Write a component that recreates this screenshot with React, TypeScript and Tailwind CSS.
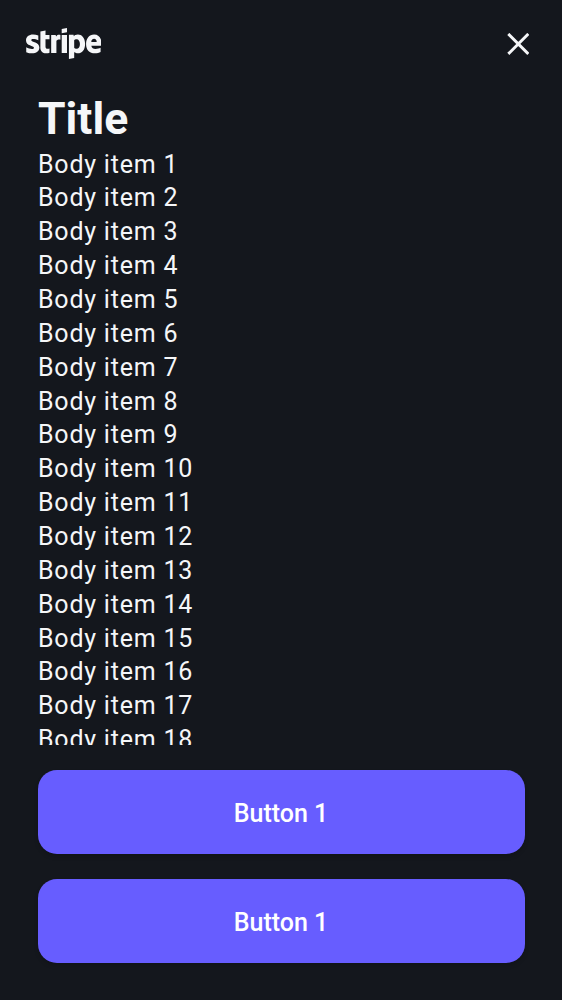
const items = Array.from({ length: 18 }, (_, i) => i + 1);

function StripeLogo() {
  return (
    <svg viewBox="54 36 360.02 149.84" preserveAspectRatio="none" className="h-[31px] w-[75.7px]" fill="#f5f6f8" fillRule="evenodd" aria-label="Stripe">
      <path d="M414 113.4c0-25.6-12.4-45.8-36.1-45.8-23.8 0-38.2 20.2-38.2 45.6 0 30.1 17 45.3 41.4 45.3 11.9 0 20.9-2.7 27.7-6.5v-20c-6.8 3.4-14.6 5.5-24.5 5.5-9.7 0-18.3-3.4-19.4-15.2h48.9c0-1.3.2-6.5.2-8.9zm-49.4-9.5c0-11.3 6.9-16 13.2-16 6.1 0 12.6 4.7 12.6 16h-25.8zM301.1 67.6c-9.8 0-16.1 4.6-19.6 7.8l-1.3-6.2h-22v116.6l25-5.3.1-28.3c3.6 2.6 8.9 6.3 17.7 6.3 17.9 0 34.2-14.4 34.2-46.1-.1-29-16.6-44.8-34.1-44.8zm-6 68.9c-5.9 0-9.4-2.1-11.8-4.7l-.1-37.1c2.6-2.9 6.2-4.9 11.9-4.9 9.1 0 15.4 10.2 15.4 23.3 0 13.4-6.2 23.4-15.4 23.4zM223.8 61.7l25.1-5.4V36l-25.1 5.3zM223.8 69.3h25.1v87.5h-25.1zM196.9 76.7l-1.6-7.4h-21.6v87.5h25V97.5c5.9-7.7 15.9-6.3 19-5.2v-23c-3.2-1.2-14.9-3.4-20.8 7.4zM146.9 47.6l-24.4 5.2-.1 80.1c0 14.8 11.1 25.7 25.9 25.7 8.2 0 14.2-1.5 17.5-3.3V135c-3.2 1.3-19 5.9-19-8.9V90.6h19V69.3h-19zM79.3 94.7c0-3.9 3.2-5.4 8.5-5.4 7.6 0 17.2 2.3 24.8 6.4V72.2c-8.3-3.3-16.5-4.6-24.8-4.6C67.5 67.6 54 78.2 54 95.9c0 27.6 38 23.2 38 35.1 0 4.6-4 6.1-9.6 6.1-8.3 0-18.9-3.4-27.3-8v23.8c9.3 4 18.7 5.7 27.3 5.7 20.8 0 35.1-10.3 35.1-28.2-.1-29.8-38.2-24.5-38.2-35.7z" />
    </svg>
  );
}

function ActionButton({ label }: { label: string }) {
  return (
    <button className="h-[83.5px] w-full shrink-0 rounded-[19px] bg-[#675dff] pt-[4px] text-[25px] leading-[30px] font-medium text-white shadow-[0_3px_4px_rgba(0,0,0,0.15)]">
      {label}
    </button>
  );
}

export default function App() {
  return (
    <div className="flex h-[1000px] w-[562px] flex-col overflow-hidden bg-[#14171d] font-[Roboto,sans-serif] text-[#f5f6f8]">
      <header className="flex h-[87px] shrink-0 items-center justify-between pr-[33px] pl-[25.5px]">
        <StripeLogo />
        <button aria-label="Close" className="pt-px">
          <svg viewBox="0 0 22 22" className="size-[22px]" fill="none" stroke="#f5f6f8" strokeWidth="2.9">
            <path d="M1.3 .9L21.3 20.9M21.3 .9L1.3 20.9" />
          </svg>
        </button>
      </header>
      <main className="h-[658px] shrink-0 overflow-hidden px-[38px] pt-[4px]">
        <h1 className="h-[56.6px] text-[44.5px] leading-[57px] font-bold">Title</h1>
        {items.map((n) => (
          <p key={n} className="h-[33.87px] text-[25px] leading-[33.87px] tracking-[0.78px]">
            Body item {n}
          </p>
        ))}
      </main>
      <footer className="flex flex-col gap-[25.5px] px-[37.5px] pt-[25px]">
        <ActionButton label="Button 1" />
        <ActionButton label="Button 1" />
      </footer>
    </div>
  );
}
